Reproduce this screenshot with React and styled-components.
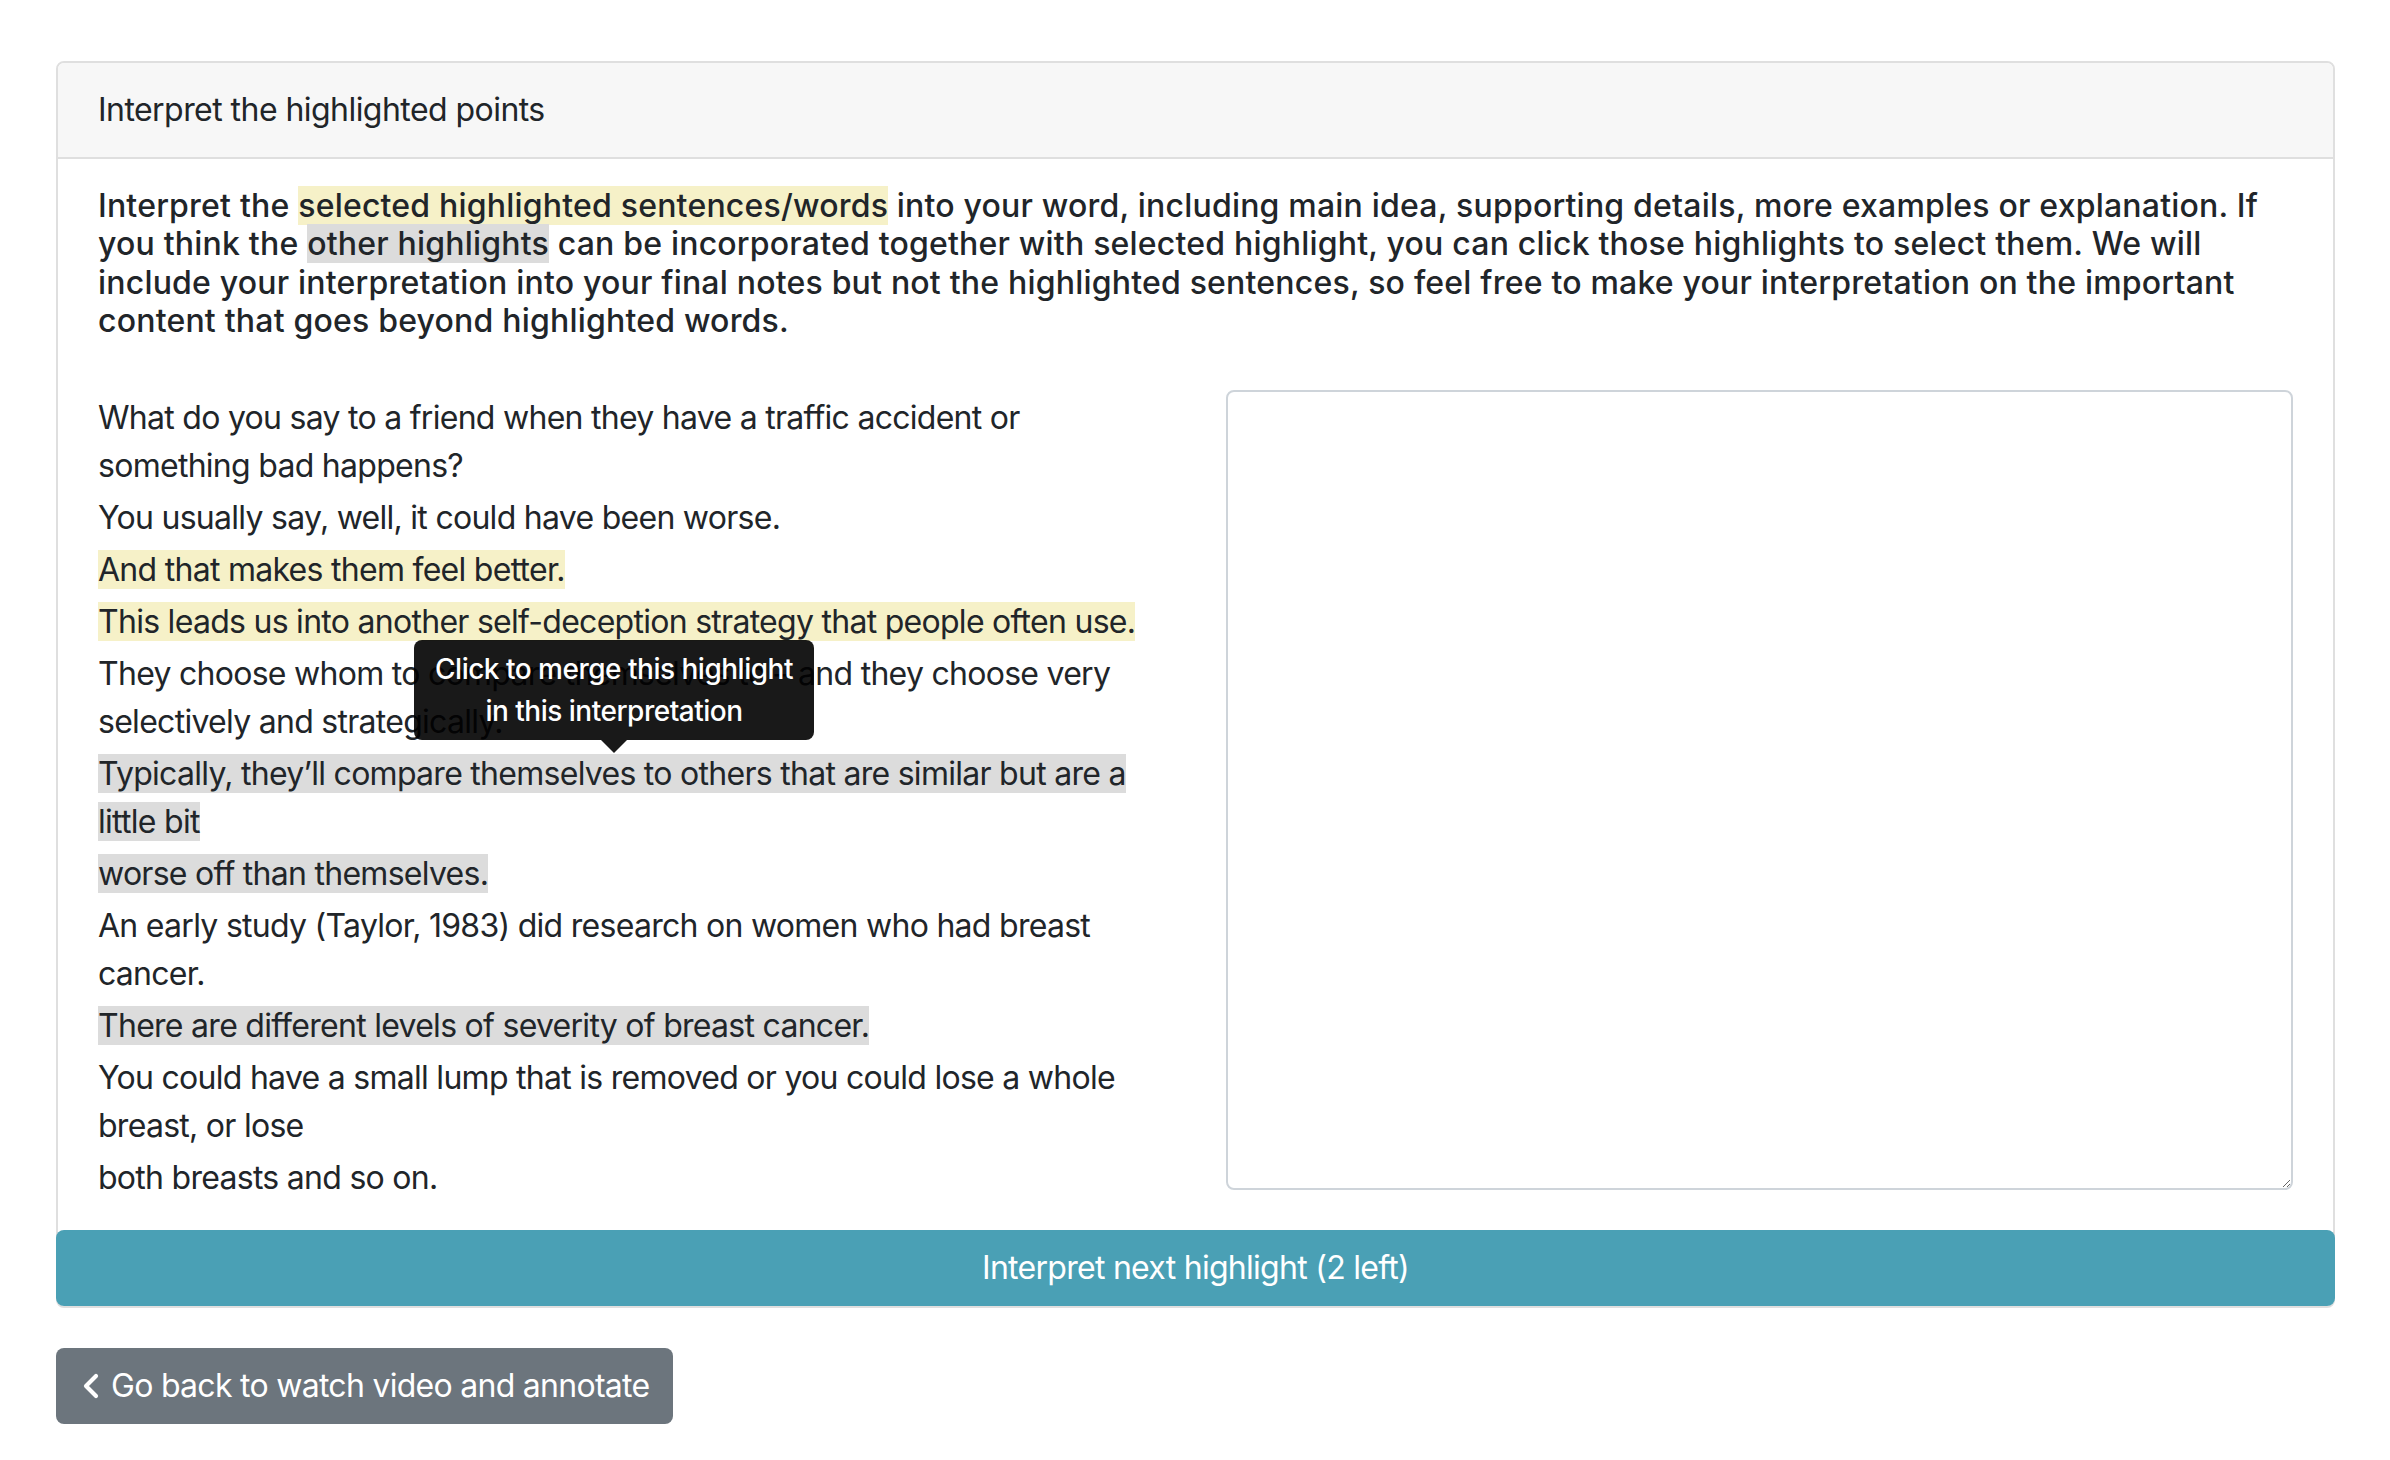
import React from 'react';
import styled, { createGlobalStyle } from 'styled-components';

const GlobalStyle = createGlobalStyle`
  html, body { margin: 0; padding: 0; background: #ffffff; }
  body {
    font-family: "Inter", "Liberation Sans", sans-serif;
    color: #212529;
    letter-spacing: -0.72px;
    -webkit-font-smoothing: antialiased;
  }
  *, *::before, *::after { box-sizing: border-box; }
`;

const Page = styled.div`
  padding: 61px 55px 36px 56px;
`;

const Card = styled.section`
  display: flex;
  flex-direction: column;
  border: 2px solid #dfdfdf;
  border-radius: 8px;
  background: #ffffff;
`;

const CardHeader = styled.header`
  padding: 23px 40px;
  background: #f7f7f7;
  border-bottom: 2px solid #dfdfdf;
  border-radius: 6px 6px 0 0;
  font-size: 32px;
  line-height: 48px;
  letter-spacing: -0.55px;
`;

const CardBody = styled.div`
  padding: 28px 40px 24px;
`;

const Instructions = styled.h6`
  margin: 0;
  font-size: 32px;
  font-weight: 500;
  line-height: 38.4px;
  letter-spacing: 0.2px;
`;

const Mark = styled.span`
  background: ${(p) => (p.$tone === 'selected' ? '#f6f1c8' : '#dcdcdc')};
`;

const Row = styled.div`
  display: grid;
  grid-template-columns: 1fr 1fr;
  column-gap: 60px;
  align-items: start;
  margin-top: 49px;
`;

const Transcript = styled.div`
  min-width: 0;
`;

const Sentence = styled.p`
  position: relative;
  margin: 4px 0;
  font-size: 32px;
  line-height: 48px;
`;

const Tooltip = styled.div`
  position: absolute;
  left: 316px;
  bottom: calc(100% + 10px);
  z-index: 5;
  width: 400px;
  padding: 8px 16px;
  border-radius: 8px;
  background: rgba(0, 0, 0, 0.9);
  color: #ffffff;
  font-size: 28px;
  font-weight: 500;
  line-height: 42px;
  letter-spacing: -0.5px;
  text-align: center;
  white-space: nowrap;

  &::after {
    content: '';
    position: absolute;
    left: 50%;
    top: 100%;
    margin-left: -13px;
    border-left: 13px solid transparent;
    border-right: 13px solid transparent;
    border-top: 13px solid rgba(0, 0, 0, 0.9);
  }
`;

const NoteArea = styled.textarea`
  display: block;
  width: 100%;
  height: 800px;
  margin: 0;
  padding: 12px 24px;
  border: 2px solid #ced4da;
  border-radius: 8px;
  font-family: inherit;
  font-size: 32px;
  line-height: 48px;
  color: #495057;
  background: #ffffff;
  resize: both;
  outline: none;
`;

const NextButton = styled.button`
  display: block;
  width: calc(100% + 4px);
  height: 76px;
  margin: 0 -2px;
  padding: 14px 24px;
  border: none;
  border-radius: 8px;
  background: #4aa0b5;
  color: #ffffff;
  font-family: inherit;
  font-size: 32px;
  line-height: 48px;
  letter-spacing: inherit;
  text-align: center;
  cursor: pointer;
`;

const Footer = styled.div`
  display: flex;
  margin-top: 40px;
`;

const BackButton = styled.button`
  display: inline-flex;
  align-items: center;
  gap: 11px;
  height: 76px;
  padding: 14px 24px 14px 26px;
  border: none;
  border-radius: 8px;
  background: #6c757d;
  color: #ffffff;
  font-family: inherit;
  font-size: 32px;
  line-height: 48px;
  letter-spacing: inherit;
  cursor: pointer;
`;

const ChevronLeft = () => (
  <svg width="18" height="26" viewBox="0 0 18 26" aria-hidden="true">
    <polyline
      points="14,3 4,13 14,23"
      fill="none"
      stroke="#ffffff"
      strokeWidth="4.2"
      strokeLinecap="round"
      strokeLinejoin="round"
    />
  </svg>
);

const sentences = [
  { text: 'What do you say to a friend when they have a traffic accident or something bad happens?' },
  { text: 'You usually say, well, it could have been worse.' },
  { text: 'And that makes them feel better.', tone: 'selected' },
  { text: 'This leads us into another self-deception strategy that people often use.', tone: 'selected' },
  { text: 'They choose whom to compare themselves to \u2013 and they choose very selectively and strategically.' },
  {
    text: 'Typically, they\u2019ll compare themselves to others that are similar but are a little bit',
    tone: 'other',
    tooltip: true,
  },
  { text: 'worse off than themselves.', tone: 'other' },
  { text: 'An early study (Taylor, 1983) did research on women who had breast cancer.' },
  { text: 'There are different levels of severity of breast cancer.', tone: 'other' },
  { text: 'You could have a small lump that is removed or you could lose a whole breast, or lose' },
  { text: 'both breasts and so on.' },
];

export default function App() {
  return (
    <>
      <GlobalStyle />
      <Page>
        <Card>
          <CardHeader>Interpret the highlighted points</CardHeader>
          <CardBody>
            <Instructions>
              Interpret the <Mark $tone="selected">selected highlighted sentences/words</Mark> into
              your word, including main idea, supporting details, more examples or explanation. If
              you think the <Mark $tone="other">other highlights</Mark> can be incorporated together
              with selected highlight, you can click those highlights to select them. We will include
              your interpretation into your final notes but not the highlighted sentences, so feel
              free to make your interpretation on the important content that goes beyond highlighted
              words.
            </Instructions>
            <Row>
              <Transcript>
                {sentences.map((s, i) => (
                  <Sentence key={i}>
                    {s.tone ? <Mark $tone={s.tone}>{s.text}</Mark> : s.text}
                    {s.tooltip && (
                      <Tooltip>
                        Click to merge this highlight
                        <br />
                        in this interpretation
                      </Tooltip>
                    )}
                  </Sentence>
                ))}
              </Transcript>
              <div>
                <NoteArea />
              </div>
            </Row>
          </CardBody>
          <NextButton>Interpret next highlight (2 left)</NextButton>
        </Card>
        <Footer>
          <BackButton>
            <ChevronLeft />
            Go back to watch video and annotate
          </BackButton>
        </Footer>
      </Page>
    </>
  );
}
